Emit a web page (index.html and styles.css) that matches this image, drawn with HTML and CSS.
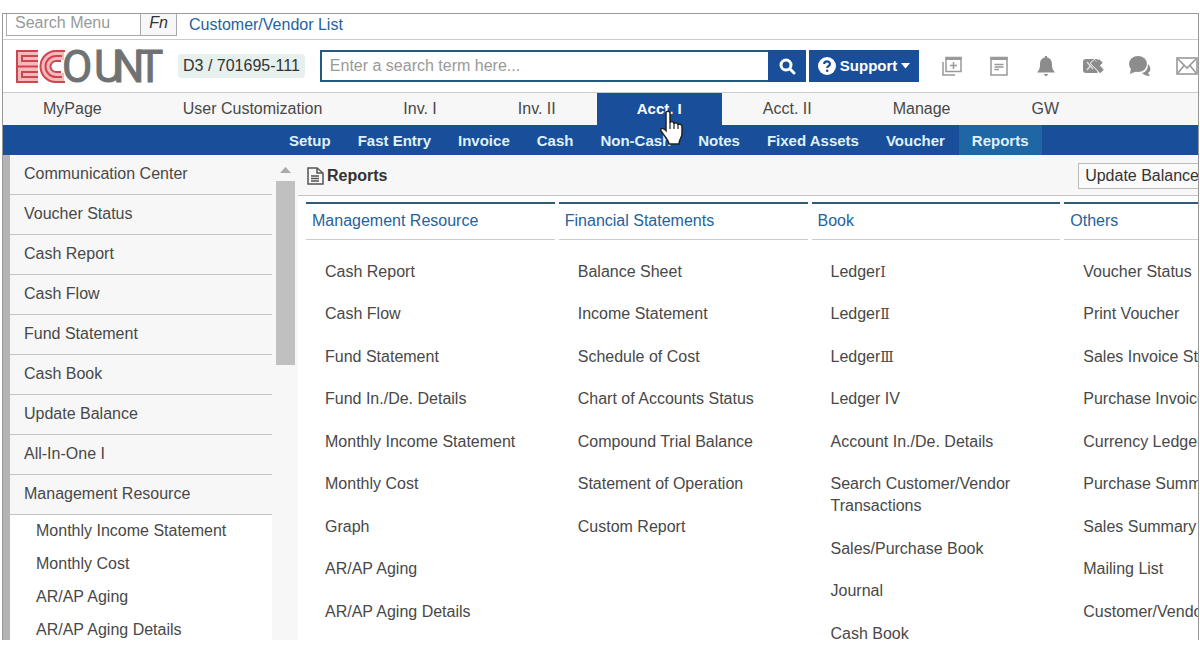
FILE: index.html
```html
<!DOCTYPE html>
<html lang="en">
<head>
<meta charset="UTF-8">
<title>ECOUNT</title>
<link rel="stylesheet" href="styles.css">
</head>
<body>
	<div class="frame">
		<div class="page">
			<div class="quick-bar">
				<input class="menu-search" type="text" placeholder="Search Menu" aria-label="Search Menu">
				<button class="fn-btn" type="button">Fn</button>
				<a class="quick-link" href="#">Customer/Vendor List</a>
			</div>

			<header class="header">
				<svg class="logo" width="150" height="36" viewBox="0 0 150 36" role="img" aria-label="ECOUNT">
					<g fill="none" stroke="#f3b9bd" stroke-width="10">
						<path d="M23 7H6V30H23M6 18.500H23"/>
						<path d="M49 7H41A11 11.500 0 0 0 41 30H49"/>
					</g>
					<g fill="none" stroke="#d0444e" stroke-width="2">
						<path d="M23 3H2V34H23"/>
						<path d="M23 8H7V13H23"/>
						<path d="M2 18.500H23"/>
						<path d="M23 24H7V29H23"/>
						<path d="M50 3H41A15.500 15.500 0 0 0 41 34H50"/>
						<path d="M47 8H41A10.500 10.500 0 0 0 41 29H47"/>
						<path d="M46 13H41A5.500 5.500 0 0 0 41 24H46"/>
					</g>
					<text class="logo-text" y="34" x="47 79 98 122">OUNT</text>
				</svg>
				<span class="company">D3 / 701695-111</span>
				<form class="search">
					<input class="search-box" type="text" placeholder="Enter a search term here..." aria-label="Search">
					<button class="search-btn" type="button" aria-label="Find">
						<svg width="18" height="18" viewBox="0 0 18 18" fill="none" stroke="#fff">
							<circle cx="8" cy="8" r="5" stroke-width="3"/>
							<path d="M12 12L16 16" stroke-width="3" stroke-linecap="round"/>
						</svg>
					</button>
				</form>
				<button class="support-btn" type="button">
					<svg width="18" height="18" viewBox="0 0 18 18">
						<circle cx="9" cy="9" r="9" fill="#fff"/>
						<path d="M6.200 7C6.200 3.500 12 3.500 12 7C12 9 9.200 9 9.200 11" fill="none" stroke="#194f9a" stroke-width="2.200"/>
						<circle cx="9.200" cy="13.800" r="1.300" fill="#194f9a"/>
					</svg>
					Support
					<svg width="9" height="6" viewBox="0 0 9 6"><path d="M0 0H9L4.500 5.500Z" fill="#fff"/></svg>
				</button>
				<div class="tools">
					<button class="tool" type="button" aria-label="New window">
						<svg width="22" height="22" viewBox="0 0 22 22" fill="none" stroke="#999">
							<path d="M5 2.500H20V16.500H5Z" stroke-width="1.500"/>
							<path d="M4.500 3.500H20.500" stroke-width="3"/>
							<path d="M9 10.500H16M12.500 7V14" stroke-width="1.500"/>
							<path d="M2 7V20H14" stroke-width="1.500"/>
						</svg>
					</button>
					<button class="tool" type="button" aria-label="Notes">
						<svg width="22" height="22" viewBox="0 0 22 22" fill="none" stroke="#999">
							<path d="M3 2.500H19V20H3Z" stroke-width="1.500"/>
							<path d="M2.500 3.500H19.500" stroke-width="3"/>
							<path d="M6.500 9.500H15.500M6.500 12H15.500M6.500 14.500H11" stroke-width="1.400"/>
						</svg>
					</button>
					<button class="tool" type="button" aria-label="Alerts">
						<svg width="22" height="22" viewBox="0 0 22 22" fill="#8c8c8c">
							<path d="M10 1H12V2.500C16 3.200 17 6 17 10C17 13.500 18 15 20 17.500H2C4 15 5 13.500 5 10C5 6 6 3.200 10 2.500Z"/>
							<path d="M8.500 19H13.500L11 21.500Z"/>
						</svg>
					</button>
					<button class="tool" type="button" aria-label="Edit">
						<svg width="22" height="22" viewBox="0 0 22 22">
							<rect x="1" y="4" width="16" height="14" rx="3" fill="#8c8c8c"/>
							<path d="M5 7L11 14M5 15L9 10" stroke="#ddd" stroke-width="1.500"/>
							<path d="M10 6L19 16" stroke="#fff" stroke-width="6"/>
							<path d="M10.500 6.500L20 16.500M16 9L19 6" stroke="#8c8c8c" stroke-width="5"/>
						</svg>
					</button>
					<button class="tool" type="button" aria-label="Chat">
						<svg width="24" height="22" viewBox="0 0 24 22" fill="#8c8c8c">
							<path d="M20 9C24 13 22 17 20 18L22 21C18 21 16 20 14 18C18 17 20 14 20 9Z"/>
							<ellipse cx="10" cy="9" rx="9" ry="8"/>
							<path d="M3 13L2 19L9 16Z"/>
						</svg>
					</button>
					<button class="tool" type="button" aria-label="Mail">
						<svg width="22" height="22" viewBox="0 0 22 22" fill="none" stroke="#999" stroke-width="1.600">
							<rect x="1" y="3" width="20" height="16"/>
							<path d="M2 4L11 13L20 4M2 18L8 10.500M20 18L14 10.500"/>
						</svg>
					</button>
				</div>
			</header>

			<nav class="tabs">
				<a class="tab" href="#">MyPage</a>
				<a class="tab" href="#">User Customization</a>
				<a class="tab" href="#">Inv. I</a>
				<a class="tab" href="#">Inv. II</a>
				<a class="tab active" href="#">Acct. I
					<svg class="pointer" width="26" height="36" viewBox="0 0 26 36">
						<path d="M7 3C7 0.500 11 0.500 11 3V13C11 11 15 11 15 14C15 12 19 12.500 19 15C19 13.500 23 14 23 16.500V24C23 28 20 29 20 34H10C9 29 5 26 2 21C0.500 18.500 4 17 7 20.500Z" fill="#fff" stroke="#222" stroke-width="1.500"/>
						<path d="M11 13V19M15 14V19M19 15V19" stroke="#222" stroke-width="1.200"/>
					</svg>
				</a>
				<a class="tab" href="#">Acct. II</a>
				<a class="tab" href="#">Manage</a>
				<a class="tab" href="#">GW</a>
			</nav>

			<nav class="sub-tabs">
				<a class="sub-tab" href="#">Setup</a>
				<a class="sub-tab" href="#">Fast Entry</a>
				<a class="sub-tab" href="#">Invoice</a>
				<a class="sub-tab" href="#">Cash</a>
				<a class="sub-tab" href="#">Non-Cash</a>
				<a class="sub-tab" href="#">Notes</a>
				<a class="sub-tab" href="#">Fixed Assets</a>
				<a class="sub-tab" href="#">Voucher</a>
				<a class="sub-tab active" href="#">Reports</a>
			</nav>

			<div class="content">
				<aside class="sidebar">
					<div class="side-menu">
						<a class="side-item" href="#">Communication Center</a>
						<a class="side-item" href="#">Voucher Status</a>
						<a class="side-item" href="#">Cash Report</a>
						<a class="side-item" href="#">Cash Flow</a>
						<a class="side-item" href="#">Fund Statement</a>
						<a class="side-item" href="#">Cash Book</a>
						<a class="side-item" href="#">Update Balance</a>
						<a class="side-item" href="#">All-In-One I</a>
						<a class="side-item" href="#">Management Resource</a>
						<div class="side-sub">
							<a href="#">Monthly Income Statement</a>
							<a href="#">Monthly Cost</a>
							<a href="#">AR/AP Aging</a>
							<a href="#">AR/AP Aging Details</a>
						</div>
					</div>
					<div class="scrollbar">
						<svg width="11" height="6" viewBox="0 0 11 6"><path d="M0 6H11L5.500 0Z" fill="#aaa"/></svg>
						<div class="thumb"></div>
					</div>
				</aside>

				<main class="main">
					<div class="title-bar">
						<h1 class="title">
							<svg width="17" height="18" viewBox="0 0 17 18" fill="none" stroke="#555" stroke-width="1.500">
								<path d="M1 1H10L16 6V17H1Z"/>
								<path d="M10 1V6H16M4 9H12M4 11.500H12M4 14H12"/>
							</svg>
							Reports
						</h1>
						<button class="update-btn" type="button">Update Balance</button>
					</div>

					<div class="columns">
						<section class="column">
							<h2>Management Resource</h2>
							<ul>
								<li><a href="#">Cash Report</a></li>
								<li><a href="#">Cash Flow</a></li>
								<li><a href="#">Fund Statement</a></li>
								<li><a href="#">Fund In./De. Details</a></li>
								<li><a href="#">Monthly Income Statement</a></li>
								<li><a href="#">Monthly Cost</a></li>
								<li><a href="#">Graph</a></li>
								<li><a href="#">AR/AP Aging</a></li>
								<li><a href="#">AR/AP Aging Details</a></li>
							</ul>
						</section>
						<section class="column">
							<h2>Financial Statements</h2>
							<ul>
								<li><a href="#">Balance Sheet</a></li>
								<li><a href="#">Income Statement</a></li>
								<li><a href="#">Schedule of Cost</a></li>
								<li><a href="#">Chart of Accounts Status</a></li>
								<li><a href="#">Compound Trial Balance</a></li>
								<li><a href="#">Statement of Operation</a></li>
								<li><a href="#">Custom Report</a></li>
							</ul>
						</section>
						<section class="column">
							<h2>Book</h2>
							<ul>
								<li><a href="#">Ledger<span class="roman">Ⅰ</span></a></li>
								<li><a href="#">Ledger<span class="roman">Ⅱ</span></a></li>
								<li><a href="#">Ledger<span class="roman">Ⅲ</span></a></li>
								<li><a href="#">Ledger IV</a></li>
								<li><a href="#">Account In./De. Details</a></li>
								<li><a href="#">Search Customer/Vendor Transactions</a></li>
								<li><a href="#">Sales/Purchase Book</a></li>
								<li><a href="#">Journal</a></li>
								<li><a href="#">Cash Book</a></li>
							</ul>
						</section>
						<section class="column">
							<h2>Others</h2>
							<ul>
								<li><a href="#">Voucher Status</a></li>
								<li><a href="#">Print Voucher</a></li>
								<li><a href="#">Sales Invoice Status</a></li>
								<li><a href="#">Purchase Invoice Status</a></li>
								<li><a href="#">Currency Ledger</a></li>
								<li><a href="#">Purchase Summary</a></li>
								<li><a href="#">Sales Summary</a></li>
								<li><a href="#">Mailing List</a></li>
								<li><a href="#">Customer/Vendor List</a></li>
							</ul>
						</section>
					</div>
				</main>
			</div>
		</div>
	</div>
</body>
</html>
```

FILE: styles.css
```css
* {
	box-sizing: border-box;
	margin: 0;
	padding: 0;
}

body {
	display: flex;
	height: 100vh;
	padding: 13px 1px 10px 2px;
	background-color: #fff;
	color: #484848;
	font-family: "Liberation Sans", Arial, sans-serif;
	font-size: 16px;
	line-height: 22px;
}

a {
	color: inherit;
	text-decoration: none;
}

button,
input {
	font: inherit;
	border: none;
	border-radius: 0;
	outline: none;
}

button {
	cursor: pointer;
}

svg {
	display: block;
	flex-shrink: 0;
}

::placeholder {
	color: #999;
	opacity: 1;
}

.frame {
	flex: 1;
	min-width: 0;
	overflow: hidden;
	border: 1px solid #999;
	border-bottom: none;
}

.page {
	display: flex;
	flex-direction: column;
	min-width: 1310px;
	height: 100%;
}

/* top strip */
.quick-bar {
	display: flex;
	align-items: flex-start;
	height: 26px;
	flex-shrink: 0;
	padding-left: 3px;
	border-bottom: 1px solid #ccc;
}

.menu-search {
	width: 135px;
	height: 22px;
	padding: 0 8px 3px;
	border: 1px solid #aaa;
	border-top: none;
}

.fn-btn {
	width: 36px;
	height: 22px;
	padding-bottom: 3px;
	line-height: 18px;
	border: 1px solid #aaa;
	border-width: 0 1px 1px 0;
	background-color: #f7f7f7;
	color: #333;
	font-style: italic;
}

.quick-link {
	margin-left: 12px;
	color: #26629c;
}

/* logo and search */
.header {
	display: flex;
	align-items: center;
	height: 52px;
	flex-shrink: 0;
	padding-left: 12px;
}

.logo-text {
	font-family: Roboto, sans-serif;
	font-size: 44px;
	fill: #707173;
	stroke: #707173;
	stroke-width: 1px;
}

.company {
	margin-left: 13px;
	padding: 1px 5px;
	border-radius: 4px;
	background-color: #e6f0ed;
	color: #333;
	white-space: nowrap;
}

.search {
	display: flex;
	width: 486px;
	margin-left: 15px;
}

.search-box {
	flex: 1;
	height: 32px;
	padding: 0 8px;
	border: 2px solid #24597f;
	border-right: none;
}

.search-btn {
	display: flex;
	justify-content: center;
	align-items: center;
	width: 38px;
	background-color: #194f9a;
}

.support-btn {
	display: flex;
	align-items: center;
	gap: 4px;
	height: 32px;
	margin-left: 3px;
	padding: 0 9px;
	background-color: #194f9a;
	color: #fff;
	font-size: 15px;
	font-weight: bold;
}

.tools {
	display: flex;
	margin-left: 9px;
}

.tool {
	display: flex;
	justify-content: center;
	width: 47px;
	background-color: transparent;
}

/* menus */
.tabs {
	display: flex;
	flex-shrink: 0;
	gap: 1px;
	height: 33px;
	border-top: 1px solid #ccc;
	background-color: #f7f7f7;
}

.tab {
	padding: 5px 40px 0;
}

.tab.active {
	position: relative;
	background-color: #194f9a;
	color: #fff;
	font-size: 15px;
	font-weight: bold;
}

.pointer {
	position: absolute;
	top: 17px;
	left: 62px;
}

.sub-tabs {
	display: flex;
	flex-shrink: 0;
	gap: 1px;
	height: 30px;
	padding-left: 273px;
	background-color: #194f9a;
	color: #dff1ff;
	font-size: 15px;
	font-weight: bold;
}

.sub-tab {
	padding: 5px 13px 0;
}

.sub-tab.active {
	background-color: #1f66a5;
}

/* left menu */
.content {
	display: flex;
	flex: 1;
	min-height: 0;
}

.sidebar {
	display: flex;
	width: 295px;
	overflow: hidden;
	border-left: 7px solid #b4b4b4;
	background-color: #f7f7f7;
}

.side-menu {
	width: 262px;
}

.side-item {
	display: block;
	height: 40px;
	padding: 8px 14px;
	border-bottom: 1px solid #c4c4c4;
}

.side-sub {
	background-color: #fff;
}

.side-sub a {
	display: block;
	height: 33px;
	padding: 5px 26px;
}

.scrollbar {
	display: flex;
	flex-direction: column;
	align-items: center;
	gap: 8px;
	width: 19px;
	margin-left: 4px;
	padding-top: 12px;
}

.thumb {
	width: 19px;
	height: 184px;
	background-color: #c0c0c0;
}

/* reports */
.main {
	flex: 1;
}

.title-bar {
	display: flex;
	justify-content: space-between;
	align-items: center;
	height: 41px;
	padding: 2px 107px 0 9px;
	border-bottom: 1px solid #c4c4c4;
	background-color: #f7f7f7;
}

.title {
	display: flex;
	align-items: center;
	gap: 3px;
	color: #333;
	font-size: 16px;
}

.update-btn {
	height: 26px;
	padding: 0 6px;
	border: 1px solid #bbb;
	background-color: #fafafa;
	color: #333;
}

.columns {
	display: grid;
	grid-template-columns: repeat(4, minmax(240px, 1fr));
	gap: 4px;
	padding: 6px 0 0 8px;
}

.column h2 {
	padding: 6px 6px 7px;
	border-top: 2px solid #2f5b76;
	border-bottom: 1px solid #ccc;
	color: #26629c;
	font-size: 16px;
	font-weight: normal;
}

.column ul {
	padding: 21px 30px 0 19px;
	list-style: none;
}

.column li {
	padding-bottom: 20px;
}

.column li:nth-child(even) {
	padding-bottom: 21px;
}

.roman {
	font-family: "DejaVu Serif", serif;
	font-size: 14px;
}
```
